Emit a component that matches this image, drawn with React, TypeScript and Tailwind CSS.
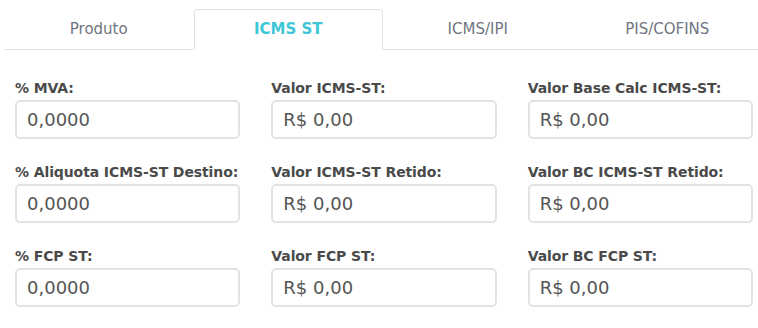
const TABS = ['Produto', 'ICMS ST', 'ICMS/IPI', 'PIS/COFINS'];

const FIELDS: { label: string; value: string }[] = [
  { label: '% MVA:', value: '0,0000' },
  { label: 'Valor ICMS-ST:', value: 'R$ 0,00' },
  { label: 'Valor Base Calc ICMS-ST:', value: 'R$ 0,00' },
  { label: '% Aliquota ICMS-ST Destino:', value: '0,0000' },
  { label: 'Valor ICMS-ST Retido:', value: 'R$ 0,00' },
  { label: 'Valor BC ICMS-ST Retido:', value: 'R$ 0,00' },
  { label: '% FCP ST:', value: '0,0000' },
  { label: 'Valor FCP ST:', value: 'R$ 0,00' },
  { label: 'Valor BC FCP ST:', value: 'R$ 0,00' },
];

export default function App() {
  const active = 1;

  return (
    <div
      className="w-[758px] h-[328px] overflow-hidden bg-white pl-1 pt-[9px]"
      style={{ fontFamily: '"DejaVu Sans", sans-serif' }}
    >
      <div className="flex w-[758px] border-b border-[#dee2e6]">
        {TABS.map((tab, i) => (
          <div
            key={tab}
            className={`
              flex-1 h-[41px] flex items-center justify-center text-[15px] -mb-px
              ${i === active
                ? 'border border-[#dee2e6] border-b-white rounded-t bg-white text-[#3ec6d6] font-bold'
                : 'border border-transparent text-[#6f7580]'}
            `}
          >
            {tab}
          </div>
        ))}
      </div>
      <div className="grid grid-cols-3 gap-x-[31px] gap-y-[23px] pl-[11px] pt-[28px] w-[749px]">
        {FIELDS.map((field) => (
          <div key={field.label} className="flex flex-col">
            <label className="text-[14px] leading-5 font-bold text-[#4a4a4a] mb-[2px] whitespace-nowrap tracking-[-0.1px]">
              {field.label}
            </label>
            <div
              className="
                h-[39px] px-[10px] flex items-center
                border-2 border-[#e3e3e3] rounded-[5px]
                text-[18px] text-[#555]
              "
            >
              {field.value}
            </div>
          </div>
        ))}
      </div>
    </div>
  );
}
